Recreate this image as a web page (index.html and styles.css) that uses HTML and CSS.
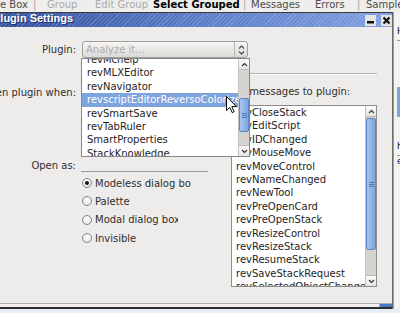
FILE: index.html
```html
<!DOCTYPE html>
<html lang="en">
<head>
    <meta charset="UTF-8">
    <title>Plugin Settings</title>
    <link rel="stylesheet" href="styles.css">
</head>
<body>
    <!-- Toolbar tabs of the window behind -->
    <div class="menubar">
        <span>e Box</span>
        <span class="sep">|</span>
        <span class="off">Group</span>
        <span class="off">Edit Group</span>
        <span class="cur">Select Grouped</span>
        <span class="sep">|</span>
        <span>Messages</span>
        <span>Errors</span>
        <span class="sep">|</span>
        <span>Sample</span>
    </div>

    <div class="desk">
        <div class="window">
            <div class="titlebar">
                <span class="title">Plugin Settings</span>
                <div class="winbtns">
                    <div class="wbtn">
                        <svg width="9" height="9" viewBox="0 0 9 9"><rect x="1" y="5" width="7" height="2.5" fill="#111"/></svg>
                    </div>
                    <div class="wbtn">
                        <svg width="9" height="9" viewBox="0 0 9 9"><path d="M1.5 1.5 L7.5 7.5 M7.5 1.5 L1.5 7.5" stroke="#111" stroke-width="2.2"/></svg>
                    </div>
                </div>
            </div>

            <div class="content">
                <div class="plugin-row">
                    <div class="lbl">Plugin:</div>
                    <div class="select">
                        <span class="value">Analyze it...</span>
                        <span class="arrows">
                            <svg width="7" height="10" viewBox="0 0 7 10"><path d="M1 3.5 L3.5 1 L6 3.5 M1 6.5 L3.5 9 L6 6.5" fill="none" stroke="#444" stroke-width="1.1"/></svg>
                        </span>
                    </div>
                </div>
                <div class="groove"></div>

                <div class="main">
                    <div class="left">
                        <div class="lbl when">Open plugin when:</div>
                        <div class="open-row">
                            <div class="lbl">Open as:</div>
                            <div class="rule"></div>
                        </div>
                        <div class="radios">
                            <div class="radio"><span class="dot on"></span><span class="rtext w96">Modeless dialog box</span></div>
                            <div class="radio"><span class="dot"></span><span class="rtext">Palette</span></div>
                            <div class="radio"><span class="dot"></span><span class="rtext w83">Modal dialog box</span></div>
                            <div class="radio"><span class="dot"></span><span class="rtext">Invisible</span></div>
                        </div>
                    </div>

                    <div class="right">
                        <div class="msg-label">Send messages to plugin:</div>
                        <div class="listbox">
                            <ul class="items">
                                <li>revCloseStack</li>
                                <li>revEditScript</li>
                                <li>revIDChanged</li>
                                <li>revMouseMove</li>
                                <li>revMoveControl</li>
                                <li>revNameChanged</li>
                                <li>revNewTool</li>
                                <li>revPreOpenCard</li>
                                <li>revPreOpenStack</li>
                                <li>revResizeControl</li>
                                <li>revResizeStack</li>
                                <li>revResumeStack</li>
                                <li>revSaveStackRequest</li>
                                <li>revSelectedObjectChanged</li>
                            </ul>
                            <div class="vscroll">
                                <div class="sb-btn">
                                    <svg width="7" height="5" viewBox="0 0 7 5"><path d="M1 4 L3.5 1.5 L6 4" fill="none" stroke="#333" stroke-width="1.1"/></svg>
                                </div>
                                <div class="gap msg-gap"></div>
                                <div class="thumb msg-thumb"></div>
                                <div class="gap fill"></div>
                                <div class="sb-btn down">
                                    <svg width="7" height="5" viewBox="0 0 7 5"><path d="M1 1 L3.5 3.5 L6 1" fill="none" stroke="#333" stroke-width="1.1"/></svg>
                                </div>
                            </div>
                        </div>
                    </div>
                </div>

                <!-- open dropdown menu of the Plugin: field -->
                <div class="popup">
                    <ul class="items popup-items">
                        <li>revMchelp</li>
                        <li>revMLXEditor</li>
                        <li>revNavigator</li>
                        <li class="sel">revscriptEditorReversoColorizer</li>
                        <li>revSmartSave</li>
                        <li>revTabRuler</li>
                        <li>SmartProperties</li>
                        <li>StackKnowledge</li>
                    </ul>
                    <div class="vscroll">
                        <div class="sb-btn">
                            <svg width="7" height="5" viewBox="0 0 7 5"><path d="M1 4 L3.5 1.5 L6 4" fill="none" stroke="#333" stroke-width="1.1"/></svg>
                        </div>
                        <div class="gap pop-gap"></div>
                        <div class="thumb pop-thumb"></div>
                        <div class="gap fill"></div>
                        <div class="sb-btn down">
                            <svg width="7" height="5" viewBox="0 0 7 5"><path d="M1 1 L3.5 3.5 L6 1" fill="none" stroke="#333" stroke-width="1.1"/></svg>
                        </div>
                    </div>
                </div>

                <svg class="cursor" width="12" height="18" viewBox="0 0 12 18">
                    <path d="M0.5 0.5 L0.5 14.5 L3.8 11.4 L6.2 16.6 L8.2 15.7 L5.9 10.6 L10.4 10.6 Z" fill="#fff" stroke="#000" stroke-width="1"/>
                </svg>
            </div>
            <div class="frame-bottom"></div>
        </div>

        <div class="behind">
            <div class="bh-line">H</div>
            <div class="bh-rule"></div>
            <div class="bh-blue"></div>
            <div class="bh-line low">h</div>
            <div class="bh-rule"></div>
            <div class="bh-line">e</div>
        </div>
    </div>
</body>
</html>
```
FILE: styles.css
```css
/* General */
body {
    margin: 0;
    width: 400px;
    height: 313px;
    overflow: hidden;
    background: #e7eef7;
    font-family: "DejaVu Sans", sans-serif;
    font-size: 10px;
    color: #2b2b2b;
}

/* Toolbar behind the dialog */
.menubar {
    height: 12px;
    background: #eeeeec;
    display: grid;
    grid-template-columns: 33px 14px 48px 58px 90px 8px 64px 42px 9px auto;
    line-height: 9px;
    white-space: nowrap;
    overflow: hidden;
    color: #4d4d4d;
}

.menubar .off {
    color: #abaaa8;
}

.menubar .cur {
    font-weight: bold;
    color: #000;
}

.menubar .sep {
    color: #a3a3a3;
}

.desk {
    display: flex;
    height: 297px;
}

/* Dialog window */
.window {
    width: 393px;
    box-sizing: border-box;
    border-top: 1px solid #3a3a3a;
    border-right: 1px solid #6f6d6b;
    display: flex;
    flex-direction: column;
}

.titlebar {
    height: 14px;
    display: flex;
    align-items: flex-start;
    justify-content: space-between;
    background:
        repeating-linear-gradient(135deg, rgba(255, 255, 255, 0.16) 0 1px, transparent 1px 3px),
        linear-gradient(to right, #32509d, #5a7cc6 50%, #7f9fdf);
}

.title {
    font-family: "Liberation Sans", sans-serif;
    font-size: 11px;
    font-weight: bold;
    line-height: 10px;
    color: #fff;
    text-indent: -7px;
    white-space: nowrap;
    text-shadow: 1px 1px 0 #1f3166;
}

.winbtns {
    display: flex;
    gap: 5px;
    margin-top: 2px;
}

.wbtn {
    width: 11px;
    height: 11px;
    background: #e4e3e1;
    display: flex;
    align-items: center;
    justify-content: center;
}

.content {
    position: relative;
    height: 262px;
    padding-top: 14px;
    background: #edecea;
    border-bottom: 1px solid #aeacaa;
}

.frame-bottom {
    height: 3px;
    background: linear-gradient(to right, #f2f1f0 379px, #4a76c4 380px);
    border-bottom: 2px solid #2d2d2d;
}

/* Form rows */
.lbl {
    width: 76px;
    display: flex;
    justify-content: flex-end;
    white-space: nowrap;
    color: #2e2e2e;
}

.plugin-row {
    display: flex;
    align-items: center;
    gap: 6px;
    height: 17px;
}

.select {
    width: 166px;
    height: 17px;
    box-sizing: border-box;
    border: 1px solid #a19f9c;
    border-radius: 3px;
    background: linear-gradient(#f6f5f4, #dcdad7);
    display: flex;
    align-items: center;
}

.select .value {
    flex: 1;
    padding-left: 3px;
    color: #aeacaa;
}

.select .arrows {
    width: 12px;
    height: 100%;
    border-left: 1px solid #b9b7b4;
    display: flex;
    align-items: center;
    justify-content: center;
}

.groove {
    margin: 15px 15px 0 81px;
    border-top: 1px solid #b4b2af;
    border-bottom: 1px solid #fff;
}

.main {
    display: flex;
}

.left {
    width: 221px;
}

.when {
    margin-top: 10.5px;
    line-height: 13px;
}

.open-row {
    display: flex;
    margin-top: 60.5px;
    height: 14px;
    line-height: 14px;
}

.rule {
    width: 127px;
    height: 12px;
    margin-left: 5px;
    border-bottom: 1px solid #9a9896;
}

.radios {
    margin: 1px 0 0 82px;
}

.radio {
    display: flex;
    align-items: center;
    gap: 3px;
    height: 18.3px;
}

.dot {
    width: 10px;
    height: 10px;
    box-sizing: border-box;
    border: 1px solid #868482;
    border-radius: 50%;
    background: radial-gradient(circle at 50% 35%, #fff, #e2e1df);
    display: flex;
    align-items: center;
    justify-content: center;
}

.dot.on::after {
    content: "";
    width: 4px;
    height: 4px;
    border-radius: 50%;
    background: #111;
}

.rtext {
    flex: none;
    white-space: nowrap;
    overflow: hidden;
    color: #2e2e2e;
}

.w96 {
    width: 96px;
}

.w83 {
    width: 83px;
}

/* Messages list */
.right {
    width: 156px;
}

.msg-label {
    margin-top: 9.5px;
    line-height: 13px;
    white-space: nowrap;
    color: #2e2e2e;
}

.listbox {
    margin: 7.5px 0 0 10px;
    width: 146px;
    height: 182px;
    box-sizing: border-box;
    border: 1px solid #8e8c89;
    background: #fff;
    display: flex;
}

.items {
    flex: 1;
    margin: 0;
    padding: 0 0 0 4px;
    list-style: none;
    overflow: hidden;
    line-height: 13.4px;
    white-space: nowrap;
    color: #1e1e1e;
}

/* Scrollbars */
.vscroll {
    width: 11px;
    box-sizing: border-box;
    border-left: 1px solid #c4c2bf;
    background: #d6d4d1;
    display: flex;
    flex-direction: column;
}

.sb-btn {
    flex: none;
    height: 11px;
    box-sizing: border-box;
    background: linear-gradient(#fbfbfa, #e6e5e3);
    border-bottom: 1px solid #bcbab7;
    display: flex;
    align-items: center;
    justify-content: center;
}

.sb-btn.down {
    border-bottom: none;
    border-top: 1px solid #bcbab7;
}

.gap {
    flex: none;
}

.gap.fill {
    flex: 1;
}

.thumb {
    flex: none;
    box-sizing: border-box;
    border: 1px solid #5d86c6;
    border-radius: 2px;
    background: linear-gradient(to right, #abc6ef, #7fa4dd);
    display: flex;
    align-items: center;
    justify-content: center;
}

.thumb::after {
    content: "";
    width: 5px;
    height: 5px;
    background: repeating-linear-gradient(#4f78b8 0 1px, transparent 1px 2px);
}

.msg-gap {
    height: 1px;
}

.msg-thumb {
    height: 132px;
}

.pop-gap {
    height: 28px;
}

.pop-thumb {
    height: 34px;
}

/* Dropdown menu */
.popup {
    position: absolute;
    left: 81px;
    top: 31px;
    width: 169px;
    height: 99px;
    box-sizing: border-box;
    border: 1px solid #8a8886;
    background: #fff;
    display: flex;
}

.popup-items {
    padding: 0;
}

.popup-items li {
    padding-left: 5px;
}

.popup-items li:first-child {
    margin-top: -6.1px;
}

.popup-items .sel {
    background: #7ea4de;
    color: #fff;
}

.cursor {
    position: absolute;
    left: 226px;
    top: 69px;
}

/* Window behind, at the right edge */
.behind {
    flex: 1;
    background: #f3f3f2;
    padding: 14px 0 0 3px;
    border-left: 1px solid #9c9a98;
    font-size: 9px;
    color: #111;
    overflow: hidden;
}

.bh-line {
    line-height: 10px;
}

.bh-line.low {
    margin-top: 24px;
}

.bh-rule {
    margin-top: 4px;
    border-top: 1px solid #9a9a9a;
}

.bh-blue {
    margin-top: 46px;
    height: 30px;
    background: #7ea4de;
}
```
